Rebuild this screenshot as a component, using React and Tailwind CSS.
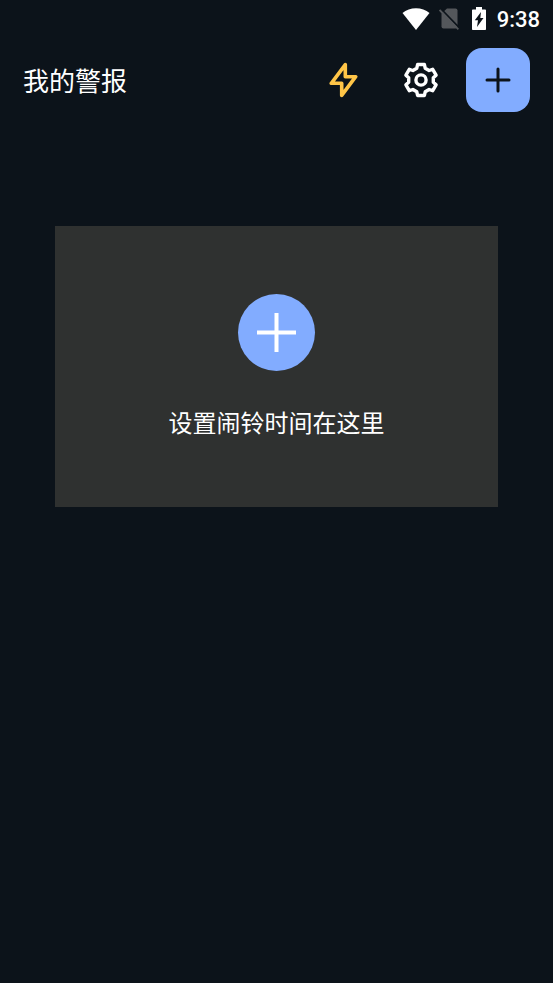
function StatusBar() {
  return (
    <div className="flex h-[37px] items-center justify-end pr-[13px] text-white">
      {/* Wifi */}
      <svg className="mr-[9px] h-[22px] w-[28px]" viewBox="0 0 28 22" fill="currentColor">
        <path d="M14 22 0.5 5C4 2 9 0.3 14 0.3S24 2 27.5 5Z" />
      </svg>
      {/* No sim */}
      <svg className="mr-[13px] h-[22px] w-[20px] text-[#54575b]" viewBox="0 0 20 22">
        <path d="M8 .5h8.500a2 2 0 0 1 2 2v16a2 2 0 0 1-2 2h-12a2 2 0 0 1-2-2V5.500Z" fill="currentColor" />
        <path d="M1.700.700 20.700 20.200" stroke="#0c131a" strokeWidth="1.800" />
        <path d="M.600 2 19.400 21.300" stroke="currentColor" strokeWidth="1.800" />
      </svg>
      {/* Battery */}
      <svg className="mr-[11px] h-[23px] w-[14px]" viewBox="0 0 14 23">
        <path d="M4 0h6v2.500h3.200c.5 0 .8.300.8.800v18.900c0 .5-.3.800-.8.800H.8c-.5 0-.8-.3-.8-.8V3.300c0-.5.300-.8.800-.8H4Z" fill="currentColor" />
        <path d="M9 5 2.800 13.300H6L5 20l6.500-9H8.300Z" fill="#0c131a" />
      </svg>
      <span className="pt-0.5 font-[Roboto,sans-serif] text-[22px] font-medium leading-none">9:38</span>
    </div>
  );
}

function GearIcon() {
  return (
    <svg className="size-9" viewBox="0 0 36 36" fill="none" stroke="currentColor" strokeWidth="3.400" strokeLinejoin="round">
      <path d="M14.600 2.500h6.800l.8 3.700 3.900 2.300 3.600-1.200 3.400 5.900-2.800 2.500v4.600l2.800 2.500-3.400 5.900-3.600-1.200-3.900 2.300-.8 3.700h-6.800l-.8-3.700-3.900-2.300-3.600 1.200-3.400-5.900 2.800-2.500v-4.600l-2.800-2.500 3.400-5.900 3.600 1.200 3.900-2.300Z" />
      <circle cx="18" cy="18" r="5.100" />
    </svg>
  );
}

function Header() {
  return (
    <header className="flex items-center justify-between px-[23px] pt-[11px]">
      <h1 className="text-[26px] leading-8">我的警报</h1>
      <div className="flex items-center gap-[13px]">
        <button type="button" aria-label="快速闹钟" className="flex size-16 items-center justify-center">
          <svg className="h-[36px] w-[30px] text-[#ffc547]" viewBox="0 0 30 36" fill="none" stroke="currentColor" strokeWidth="3.600" strokeLinejoin="round">
            <path d="M16.300 2.600 2.300 21.300h10.400v12.100L26.700 14.700H16.300Z" />
          </svg>
        </button>
        <button type="button" aria-label="设置" className="flex size-16 items-center justify-center">
          <GearIcon />
        </button>
        <button type="button" aria-label="添加闹钟" className="flex size-16 items-center justify-center rounded-2xl bg-[#82acff] text-[#0c131a]">
          <svg className="size-[26px]" viewBox="0 0 26 26" fill="none" stroke="currentColor" strokeWidth="3" strokeLinecap="round">
            <path d="M13 2v22M2 13h22" />
          </svg>
        </button>
      </div>
    </header>
  );
}

export default function App() {
  return (
    <div className="min-h-screen bg-[#0c131a] font-['Noto_Sans_CJK_SC',sans-serif] text-white">
      <StatusBar />
      <Header />
      <main className="px-[55px] pt-[114px]">
        <button type="button" className="flex w-full flex-col items-center bg-[#2f3130] pt-[68px] pb-[67px]">
          <span className="flex size-[77px] items-center justify-center rounded-full bg-[#82acff]">
            <svg className="size-[39px]" viewBox="0 0 39 39" fill="none" stroke="currentColor" strokeWidth="4">
              <path d="M19.500 0v39M0 19.500h39" />
            </svg>
          </span>
          <span className="mt-[33px] text-[24px] leading-9">设置闹铃时间在这里</span>
        </button>
      </main>
    </div>
  );
}
